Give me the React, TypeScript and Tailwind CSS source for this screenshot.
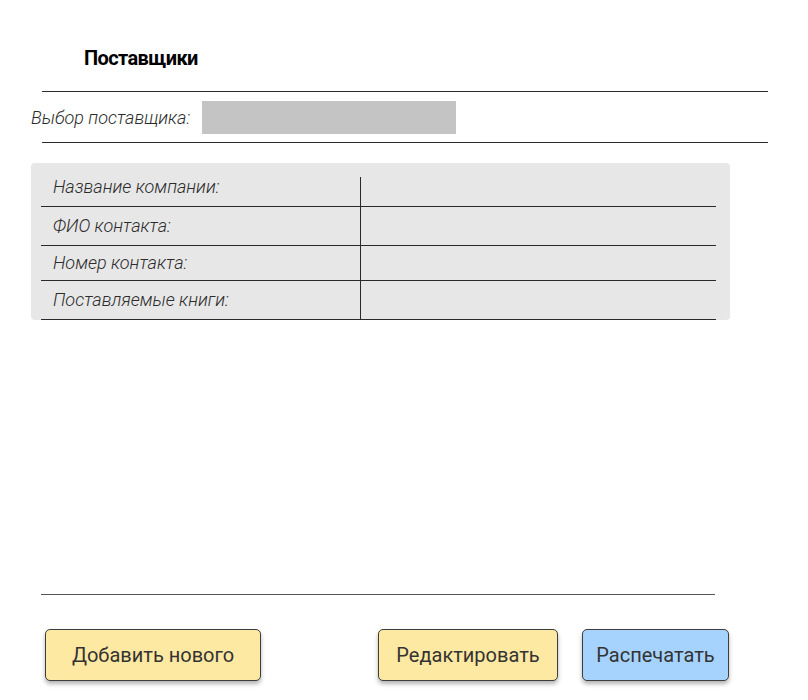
const ROWS = [
  { label: "Название компании:", h: "h-[30px]", align: "items-start" },
  { label: "ФИО контакта:", h: "h-[39px]", align: "items-center" },
  { label: "Номер контакта:", h: "h-[35px]", align: "items-center" },
  { label: "Поставляемые книги:", h: "h-[39px]", align: "items-center" },
];

function ActionButton({ children, tone, width }: { children: string; tone: "yellow" | "blue"; width: string }) {
  const bg = tone === "yellow" ? "bg-[#fee9a2]" : "bg-[#a6d3fe]";
  return (
    <button
      className={`${width} ${bg} h-[52px] rounded-[5px] border border-[#3d3d3d] text-[20px] font-normal text-[#333] shadow-[0_3px_4px_rgba(0,0,0,0.3)]`}
    >
      {children}
    </button>
  );
}

export default function App() {
  return (
    <div className="w-[808px] h-[700px] bg-white font-['Roboto',sans-serif] text-[#222]">
      <div className="pt-[45px] pl-[84px] h-[91px]">
        <h1 className="text-[20px] leading-[26px] font-bold tracking-[-0.6px] text-black">Поставщики</h1>
      </div>

      <div className="ml-[42px] w-[726px] border-t border-[#2a2a2a]" />
      <div className="flex items-center h-[50px] pl-[31px]">
        <span className="w-[171px] text-[18px] italic font-light text-[#2b2b2b]">Выбор поставщика:</span>
        <div className="w-[254px] h-[33px] bg-[#c4c4c4]" />
      </div>
      <div className="ml-[42px] w-[726px] border-t border-[#2a2a2a]" />

      <div className="mt-[20px] ml-[31px] w-[699px] h-[157px] rounded-[4px] bg-[#e7e7e7] pt-[14px] pl-[10px]">
        <div className="w-[675px]">
          {ROWS.map((r) => (
            <div key={r.label} className={`grid grid-cols-[320px_1fr] ${r.h} border-b border-[#2a2a2a]`}>
              <div className={`flex ${r.align} border-r border-[#2a2a2a] pl-[12px]`}>
                <span className="text-[18px] leading-[20px] italic font-light text-[#2b2b2b]">{r.label}</span>
              </div>
              <div />
            </div>
          ))}
        </div>
      </div>

      <div className="mt-[274px] ml-[41px] w-[674px] border-t border-[#555]" />

      <div className="flex mt-[34px] pl-[45px]">
        <ActionButton tone="yellow" width="w-[216px]">Добавить нового</ActionButton>
        <div className="ml-[117px]">
          <ActionButton tone="yellow" width="w-[180px]">Редактировать</ActionButton>
        </div>
        <div className="ml-[24px]">
          <ActionButton tone="blue" width="w-[147px]">Распечатать</ActionButton>
        </div>
      </div>
    </div>
  );
}
